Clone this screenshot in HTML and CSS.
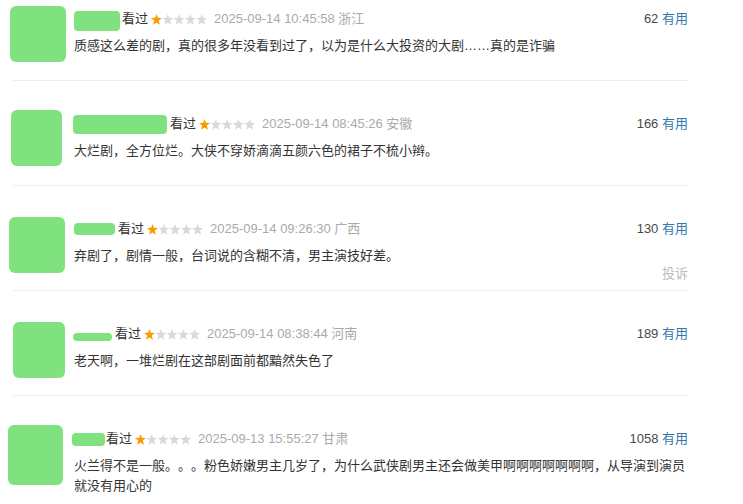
FILE: index.html
```html
<!DOCTYPE html>
<html lang="zh-CN">
<head>
  <meta charset="UTF-8">
  <title>短评</title>
  <link rel="stylesheet" href="styles.css">
</head>
<body>

<svg class="sprite" width="0" height="0">
  <defs>
    <symbol id="star" viewBox="0 0 11 11">
      <polygon points="5.5,0 6.9,3.8 11,4.1 7.8,6.6 8.9,10.8 5.5,8.5 2.1,10.8 3.2,6.6 0,4.1 4.1,3.8"/>
    </symbol>
  </defs>
</svg>

<div class="comments">

  <div class="comment">
    <div class="avatar-box"><div class="avatar"></div></div>
    <div class="comment-body">
      <div class="comment-info">
        <span class="mask mask-1"></span>
        <span class="status">看过</span>
        <svg class="rating" width="56" height="11">
          <use href="#star" x="0" width="11" height="11" class="on"/>
          <use href="#star" x="11.3" width="11" height="11"/>
          <use href="#star" x="22.6" width="11" height="11"/>
          <use href="#star" x="33.9" width="11" height="11"/>
          <use href="#star" x="45.2" width="11" height="11"/>
        </svg>
        <span class="comment-time">2025-09-14 10:45:58 浙江</span>
        <span class="votes"><span class="vote-count">62</span> <a class="vote-link">有用</a></span>
      </div>
      <p class="comment-text">质感这么差的剧，真的很多年没看到过了，以为是什么大投资的大剧……真的是诈骗</p>
    </div>
  </div>
  <div class="divider"></div>

  <div class="comment">
    <div class="avatar-box"><div class="avatar avatar-2"></div></div>
    <div class="comment-body">
      <div class="comment-info">
        <span class="mask mask-2"></span>
        <span class="status">看过</span>
        <svg class="rating" width="56" height="11">
          <use href="#star" x="0" width="11" height="11" class="on"/>
          <use href="#star" x="11.3" width="11" height="11"/>
          <use href="#star" x="22.6" width="11" height="11"/>
          <use href="#star" x="33.9" width="11" height="11"/>
          <use href="#star" x="45.2" width="11" height="11"/>
        </svg>
        <span class="comment-time">2025-09-14 08:45:26 安徽</span>
        <span class="votes"><span class="vote-count">166</span> <a class="vote-link">有用</a></span>
      </div>
      <p class="comment-text">大烂剧，全方位烂。大侠不穿娇滴滴五颜六色的裙子不梳小辫。</p>
    </div>
  </div>
  <div class="divider"></div>

  <div class="comment">
    <div class="avatar-box"><div class="avatar avatar-3"></div></div>
    <div class="comment-body">
      <div class="comment-info">
        <span class="mask mask-3"></span>
        <span class="status">看过</span>
        <svg class="rating" width="56" height="11">
          <use href="#star" x="0" width="11" height="11" class="on"/>
          <use href="#star" x="11.3" width="11" height="11"/>
          <use href="#star" x="22.6" width="11" height="11"/>
          <use href="#star" x="33.9" width="11" height="11"/>
          <use href="#star" x="45.2" width="11" height="11"/>
        </svg>
        <span class="comment-time">2025-09-14 09:26:30 广西</span>
        <span class="votes"><span class="vote-count">130</span> <a class="vote-link">有用</a></span>
      </div>
      <p class="comment-text">弃剧了，剧情一般，台词说的含糊不清，男主演技好差。</p>
      <div class="report">投诉</div>
    </div>
  </div>
  <div class="divider"></div>

  <div class="comment">
    <div class="avatar-box"><div class="avatar avatar-4"></div></div>
    <div class="comment-body">
      <div class="comment-info">
        <span class="mask mask-4"></span>
        <span class="status">看过</span>
        <svg class="rating" width="56" height="11">
          <use href="#star" x="0" width="11" height="11" class="on"/>
          <use href="#star" x="11.3" width="11" height="11"/>
          <use href="#star" x="22.6" width="11" height="11"/>
          <use href="#star" x="33.9" width="11" height="11"/>
          <use href="#star" x="45.2" width="11" height="11"/>
        </svg>
        <span class="comment-time">2025-09-14 08:38:44 河南</span>
        <span class="votes"><span class="vote-count">189</span> <a class="vote-link">有用</a></span>
      </div>
      <p class="comment-text">老天啊，一堆烂剧在这部剧面前都黯然失色了</p>
    </div>
  </div>
  <div class="divider"></div>

  <div class="comment">
    <div class="avatar-box"><div class="avatar avatar-5"></div></div>
    <div class="comment-body">
      <div class="comment-info">
        <span class="mask mask-5"></span>
        <span class="status">看过</span>
        <svg class="rating" width="56" height="11">
          <use href="#star" x="0" width="11" height="11" class="on"/>
          <use href="#star" x="11.3" width="11" height="11"/>
          <use href="#star" x="22.6" width="11" height="11"/>
          <use href="#star" x="33.9" width="11" height="11"/>
          <use href="#star" x="45.2" width="11" height="11"/>
        </svg>
        <span class="comment-time">2025-09-13 15:55:27 甘肃</span>
        <span class="votes"><span class="vote-count">1058</span> <a class="vote-link">有用</a></span>
      </div>
      <p class="comment-text">火兰得不是一般。。。粉色娇嫩男主几岁了，为什么武侠剧男主还会做美甲啊啊啊啊啊啊啊，从导演到演员就没有用心的</p>
    </div>
  </div>

</div>

</body>
</html>
```

FILE: styles.css
```css
body {
  margin: 0;
  background: #fff;
  color: #333;
  font-family: "Liberation Sans", Arial, "Noto Sans CJK SC", sans-serif;
  font-size: 13px;
  text-spacing-trim: space-all;
}

.sprite {
  position: absolute;
  width: 0;
  height: 0;
}

.comments {
  width: 688px;
  padding-top: 6px;
}

.comment {
  display: flex;
  height: 74px;
  padding-left: 8px;
}

.avatar-box {
  width: 66px;
  flex-shrink: 0;
}

.avatar {
  width: 56px;
  height: 56px;
  margin-left: 2px;
  border-radius: 6px;
  background: #80e27e;
}

.avatar-2 {
  width: 51px;
  margin-left: 3px;
  margin-top: -1px;
}

.avatar-3 {
  margin-left: 1px;
  margin-top: 1px;
}

.avatar-4 {
  width: 52px;
  margin-left: 5px;
  margin-top: 1px;
}

.avatar-5 {
  width: 55px;
  height: 60px;
  margin-left: 0;
  margin-top: -1px;
}

.comment-body {
  flex: 1;
  padding-top: 3px;
}

.comment-info {
  display: flex;
  align-items: center;
  height: 20px;
  line-height: 20px;
}

.mask {
  display: inline-block;
  margin-right: 2px;
  border-radius: 4px;
  background: #80e27e;
}

.mask-1 { width: 46px; height: 20px; margin-top: 4px; }
.mask-2 { width: 94px; height: 19px; margin-top: 0; margin-left: -1px; margin-right: 3px; }
.mask-3 { width: 41px; height: 12px; margin-right: 3px; }
.mask-4 { width: 39px; height: 8px; margin-top: 6px; margin-left: -1px; margin-right: 3px; }
.mask-5 { width: 33px; height: 13px; margin-left: -2px; margin-right: 1px; }

.status {
  color: #333;
}

.rating {
  margin-left: 3px;
  fill: #d9d9d9;
}

.rating .on {
  fill: #f99b01;
}

.comment-time {
  margin-left: 7px;
  color: #aaa;
}

.votes {
  margin-left: auto;
  color: #494949;
}

.vote-link {
  color: #37a;
}

.comment-text {
  margin: 7px 0 0;
  line-height: 20px;
  color: #333;
}

.report {
  line-height: 16px;
  text-align: right;
  color: #bbb;
}

.divider {
  height: 1px;
  margin: 0 0 30px 13px;
  background: #eee;
}
```
